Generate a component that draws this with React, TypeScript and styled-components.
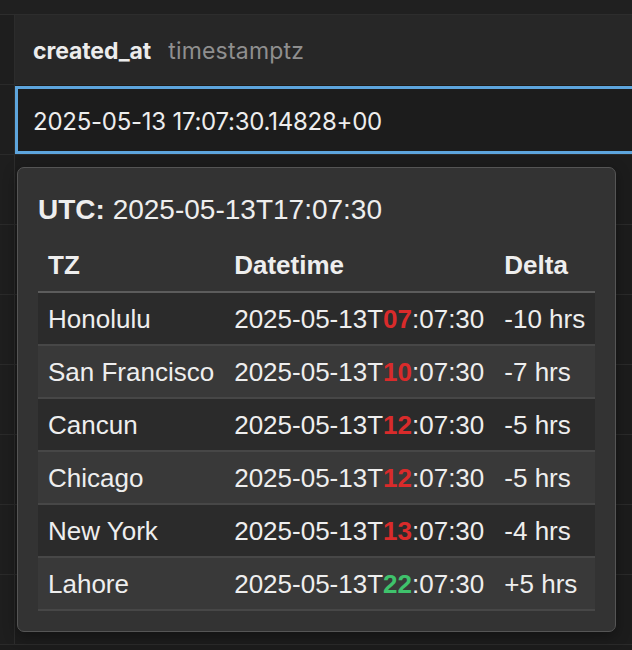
import React from "react"
import styled, { createGlobalStyle } from "styled-components"

const GlobalStyle = createGlobalStyle`
  html, body {
    margin: 0;
    padding: 0;
    background: #1c1c1c;
  }
`;

const Grid = styled.div`
  position: relative;
  width: 632px;
  height: 650px;
  overflow: hidden;
  background: #1c1c1c;
  font-family: Inter, "Noto Sans", sans-serif;
`;

const TopStrip = styled.div`
  height: 14px;
  background: #202020;
  border-bottom: 1px solid #2d2d2d;
`;

const Row = styled.div<{ $height?: number }>`
  display: flex;
  height: ${(p) => p.$height ?? 70}px;
  box-sizing: border-box;
  border-bottom: 1px solid #2a2a2a;
`;

const Gutter = styled.div`
  width: 14px;
  flex: none;
  border-right: 1px solid #2c2c2c;
  background: #1e1e1e;
`;

const HeaderCell = styled.div`
  flex: 1;
  display: flex;
  align-items: center;
  gap: 17px;
  padding-left: 18px;
  padding-top: 2px;
  background: #272727;
`;

const ColumnName = styled.span`
  font-size: 23px;
  font-weight: 700;
  letter-spacing: -0.1px;
  color: #ececec;
`;

const ColumnType = styled.span`
  font-size: 23px;
  letter-spacing: 0.2px;
  color: #8f8f8f;
`;

const Cell = styled.div<{ $selected?: boolean }>`
  flex: 1;
  display: flex;
  align-items: center;
  box-sizing: border-box;
  margin-right: -10px;
  padding-left: 15px;
  padding-top: 2px;
  font-size: 24px;
  letter-spacing: -0.25px;
  color: #ededed;
  border: ${(p) => (p.$selected ? "3px solid #5da5dd" : "none")};
  margin-top: ${(p) => (p.$selected ? "1px" : "0")};
`;

const Popover = styled.div`
  position: absolute;
  left: 17px;
  top: 167px;
  padding: 26px 20px 20px;
  background: #333333;
  border: 1px solid #555555;
  border-radius: 7px;
  font-family: "Liberation Sans", Arial, sans-serif;
  color: #eeeeee;
  box-shadow: 0 4px 14px rgba(0, 0, 0, 0.35);
`;

const UtcLine = styled.div`
  font-size: 28px;
  line-height: 32px;
  margin-bottom: 13px;
  b {
    font-weight: 700;
  }
`;

const Table = styled.table`
  border-collapse: collapse;
  font-size: 26px;
  white-space: nowrap;

  th {
    height: 53px;
    padding: 0 10px;
    text-align: left;
    font-weight: 700;
    border-bottom: 2px solid #5c5c5c;
    box-sizing: border-box;
  }

  td {
    height: 49px;
    padding: 2px 10px 0;
    border-bottom: 2px solid #474747;
  }
`;

const TzRow = styled.tr<{ $alt: boolean }>`
  background: ${(p) => (p.$alt ? "#393939" : "#2b2b2b")};
`;

const Hour = styled.span<{ $ahead: boolean }>`
  font-weight: 700;
  color: ${(p) => (p.$ahead ? "#3fc26c" : "#d92b2b")};
`;

const zones = [
  { name: "Honolulu", hour: "07", delta: -10 },
  { name: "San Francisco", hour: "10", delta: -7 },
  { name: "Cancun", hour: "12", delta: -5 },
  { name: "Chicago", hour: "12", delta: -5 },
  { name: "New York", hour: "13", delta: -4 },
  { name: "Lahore", hour: "22", delta: 5 },
];

const App: React.FC = () => {
  return (
    <Grid>
      <GlobalStyle />
      <TopStrip />
      <Row>
        <Gutter />
        <HeaderCell>
          <ColumnName>created_at</ColumnName>
          <ColumnType>timestamptz</ColumnType>
        </HeaderCell>
      </Row>
      <Row>
        <Gutter />
        <Cell $selected>2025-05-13 17:07:30.14828+00</Cell>
      </Row>
      {[0, 1, 2, 3, 4, 5, 6].map((i) => (
        <Row key={i}>
          <Gutter />
          <Cell />
        </Row>
      ))}

      <Popover>
        <UtcLine>
          <b>UTC:</b> 2025-05-13T17:07:30
        </UtcLine>
        <Table>
          <thead>
            <tr>
              <th>TZ</th>
              <th>Datetime</th>
              <th>Delta</th>
            </tr>
          </thead>
          <tbody>
            {zones.map((z, i) => (
              <TzRow key={z.name} $alt={i % 2 === 1}>
                <td>{z.name}</td>
                <td>
                  2025-05-13T<Hour $ahead={z.delta > 0}>{z.hour}</Hour>:07:30
                </td>
                <td>{z.delta > 0 ? `+${z.delta}` : z.delta} hrs</td>
              </TzRow>
            ))}
          </tbody>
        </Table>
      </Popover>
    </Grid>
  );
};

export default App;
